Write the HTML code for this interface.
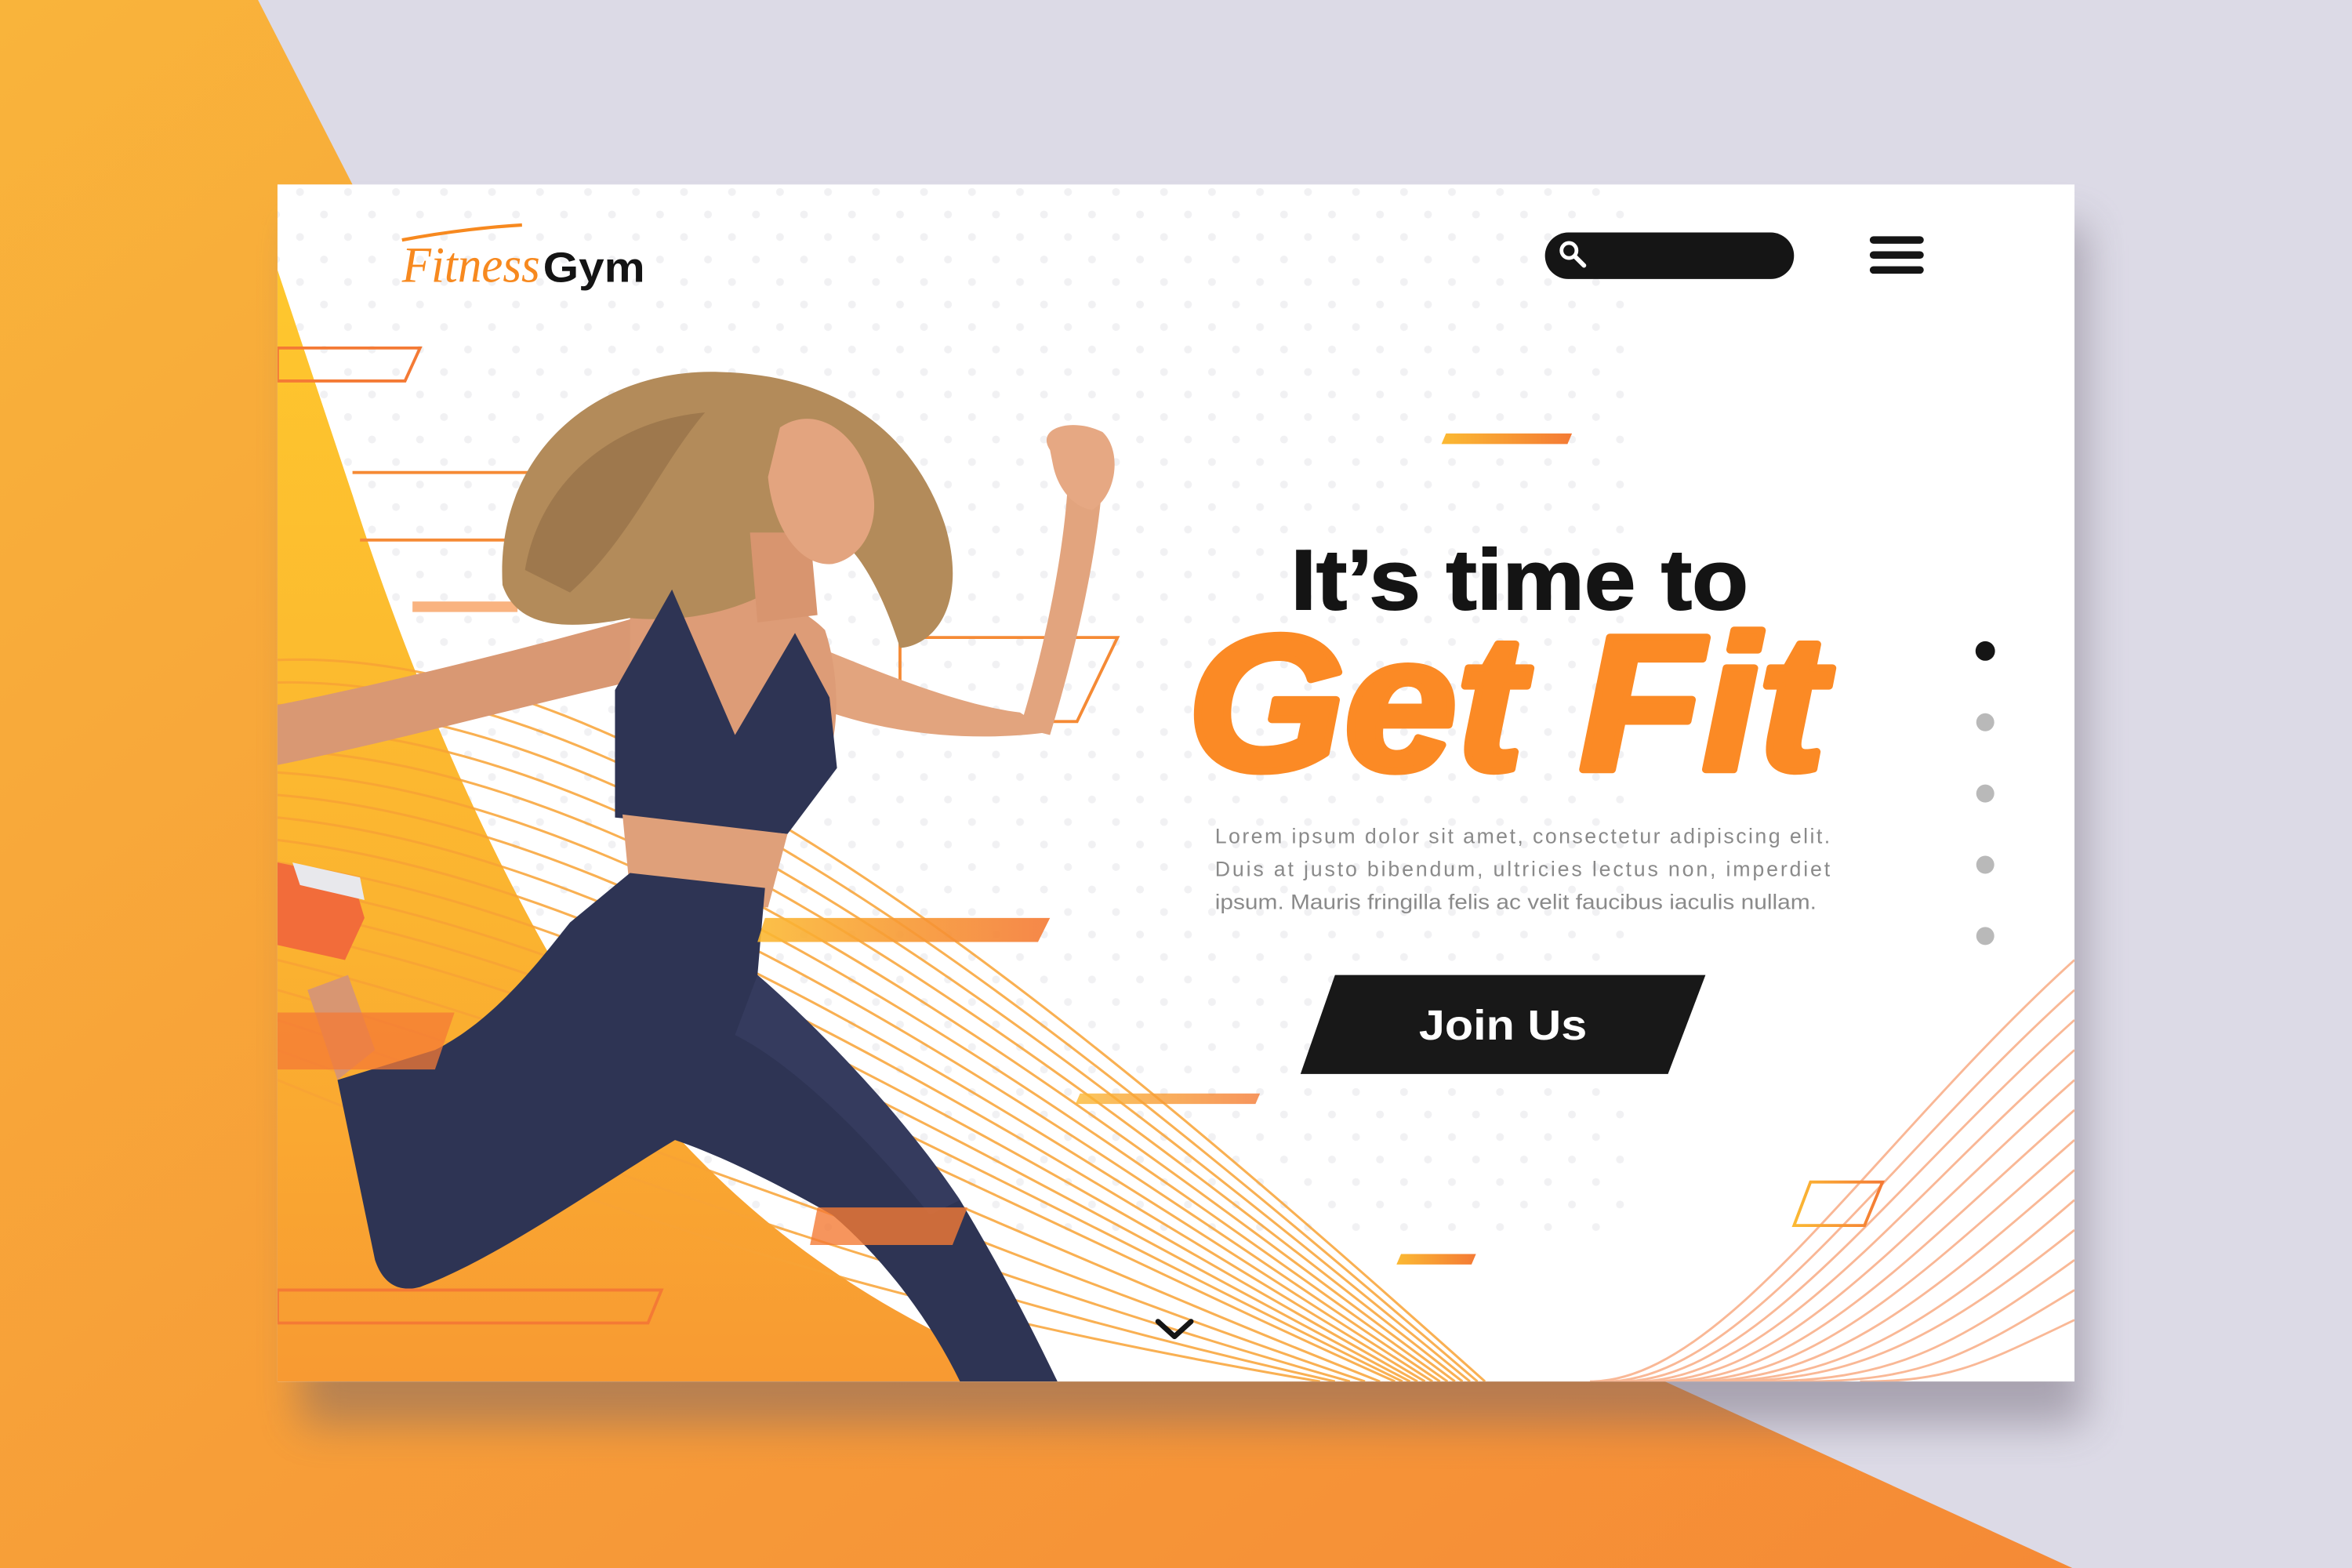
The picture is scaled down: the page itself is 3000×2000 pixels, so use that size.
<!DOCTYPE html>
<html><head><meta charset="utf-8"><style>
html,body{margin:0;padding:0;width:3000px;height:2000px;overflow:hidden;background:#dcdae6}
svg{display:block}
</style></head><body>
<svg width="3000" height="2000" viewBox="0 0 1568 1045.33" xmlns="http://www.w3.org/2000/svg">
<defs>
<linearGradient id="bgo" x1="0" y1="0" x2="1" y2="1"><stop offset="0" stop-color="#f9b43b"/><stop offset="1" stop-color="#f58a36"/></linearGradient>
<linearGradient id="yel" x1="0" y1="0" x2="0" y2="1"><stop offset="0" stop-color="#fec72e"/><stop offset="0.6" stop-color="#fbb330"/><stop offset="1" stop-color="#f89a32"/></linearGradient>
<linearGradient id="bar" x1="0" y1="0" x2="1" y2="0"><stop offset="0" stop-color="#fbb933"/><stop offset="1" stop-color="#f47a35"/></linearGradient>
<filter id="sh" x="-10%" y="-10%" width="120%" height="130%"><feGaussianBlur stdDeviation="14"/></filter>
<clipPath id="card"><rect x="185" y="123" width="1198" height="798"/></clipPath>
<pattern id="dots" width="32" height="30" patternUnits="userSpaceOnUse"><circle cx="8" cy="8" r="2.6" fill="#f1f1f3"/><circle cx="24" cy="23" r="2.6" fill="#f1f1f3"/></pattern>
</defs>
<rect width="1568" height="1046" fill="#dcdae6"/>
<polygon points="0,0 172,0 235,123 185,123 185,921 1110,921 1383,1046 0,1046" fill="url(#bgo)"/>
<rect x="200" y="150" width="1190" height="800" fill="#6a6070" opacity="0.45" filter="url(#sh)"/>
<rect x="185" y="123" width="1198" height="798" fill="#fff"/>
<g clip-path="url(#card)">
<rect x="185" y="123" width="900" height="700" fill="url(#dots)"/>
<path d="M185,180 L235,330 C270,440 320,560 380,660 C450,780 560,870 700,921 L185,921 Z" fill="url(#yel)"/>
<g fill="none" stroke="#f8a335" stroke-width="1.6" opacity="0.85">
<path d="M185,440 C430,430 720,680 990,921"/>
<path d="M185,455 C430,450 715,690 985,921"/>
<path d="M185,470 C430,470 710,700 980,921"/>
<path d="M185,485 C430,490 705,710 975,921"/>
<path d="M185,500 C430,510 700,720 970,921"/>
<path d="M185,515 C430,530 695,730 965,921"/>
<path d="M185,530 C430,550 690,740 960,921"/>
<path d="M185,545 C430,570 685,750 955,921"/>
<path d="M185,560 C430,590 680,760 950,921"/>
<path d="M185,575 C430,610 675,770 945,921"/>
<path d="M185,590 C430,630 670,780 940,921"/>
<path d="M185,605 C430,650 665,790 935,921"/>
<path d="M185,620 C430,670 660,800 930,921"/>
<path d="M185,640 C430,700 650,815 920,921"/>
<path d="M185,660 C430,730 640,830 910,921"/>
<path d="M185,680 C430,760 630,845 900,921"/>
<path d="M185,700 C430,790 620,860 890,921"/>
<path d="M185,720 C430,820 610,875 880,921"/>
</g>
<g fill="none" stroke="#f79a6a" stroke-width="1.5" opacity="0.7">
<path d="M1383,640 C1250,760 1150,921 1060,921"/>
<path d="M1383,660 C1255,775 1160,921 1070,921"/>
<path d="M1383,680 C1260,790 1170,921 1080,921"/>
<path d="M1383,700 C1265,805 1180,921 1090,921"/>
<path d="M1383,720 C1270,820 1190,921 1100,921"/>
<path d="M1383,740 C1275,835 1200,921 1110,921"/>
<path d="M1383,760 C1280,850 1210,921 1120,921"/>
<path d="M1383,780 C1285,865 1220,921 1130,921"/>
<path d="M1383,800 C1290,880 1230,921 1140,921"/>
<path d="M1383,820 C1295,890 1240,921 1150,921"/>
<path d="M1383,840 C1300,900 1260,921 1170,921"/>
<path d="M1383,860 C1310,905 1280,921 1200,921"/>
<path d="M1383,880 C1320,910 1300,921 1240,921"/>
</g>
<polygon points="185,232 280,232 270,254 185,254" fill="none" stroke="#f47a35" stroke-width="2"/>
<line x1="235" y1="315" x2="390" y2="315" stroke="#f58a35" stroke-width="2"/>
<line x1="240" y1="360" x2="350" y2="360" stroke="#f58a35" stroke-width="2"/>
<rect x="275" y="401" width="70" height="7" fill="#f8a060" opacity="0.8"/>
<polygon points="600,425 745,425 718,481 600,481" fill="none" stroke="#f58a35" stroke-width="2"/>
<g>
<path d="M430,410 C360,430 260,455 185,470 L185,510 C260,495 350,470 440,450 Z" fill="#d99873"/>
<path d="M530,425 C590,450 640,470 680,475 L700,488 C650,495 590,490 540,470 Z" fill="#e2a47e"/>
<path d="M680,485 C700,420 710,360 712,320 L735,322 C730,380 715,440 700,490 Z" fill="#e2a47e"/>
<path d="M700,300 C690,285 715,278 735,288 C748,300 745,330 728,340 C715,338 705,325 702,310 Z" fill="#e6a883"/>
<path d="M420,400 C460,385 520,390 550,420 C560,450 560,490 550,510 L420,520 Z" fill="#dd9c77"/>
<path d="M335,390 C330,300 400,245 480,248 C560,250 610,290 630,350 C645,400 625,430 600,432 C590,400 575,370 560,360 L520,390 C490,410 450,415 420,412 C380,420 345,420 335,390 Z" fill="#b38b5a"/>
<path d="M350,380 C360,320 410,280 470,275 C440,310 420,360 380,395 Z" fill="#8f6c44" opacity="0.6"/>
<path d="M500,355 L540,355 L545,410 L505,415 Z" fill="#d8956f"/>
<path d="M520,285 C545,268 575,290 582,328 C586,350 575,372 555,376 C532,378 515,350 512,318 Z" fill="#e3a47f"/>
<path d="M410,460 L448,393 L490,490 L530,422 L553,465 L558,512 L525,556 L410,545 Z" fill="#2e3454"/>
<path d="M415,543 L525,556 L512,605 L420,595 Z" fill="#dfa07a"/>
<path d="M420,582 L510,592 L505,650 C540,680 600,740 640,800 C670,850 690,890 705,921 L640,921 C620,880 590,840 555,810 C520,790 480,770 450,760 C400,790 330,840 280,858 C265,862 255,855 250,840 L225,720 L290,700 C330,680 360,640 380,615 Z" fill="#2e3454"/>
<path d="M505,650 C540,680 600,740 640,800 L620,810 C580,760 530,710 490,690 Z" fill="#3a4165" opacity="0.6"/>
<path d="M225,720 L250,700 L232,650 L205,660 Z" fill="#d89672"/>
<path d="M185,575 L235,585 L243,612 L230,640 L185,630 Z" fill="#f26c3a"/>
<path d="M195,575 L240,585 L243,600 L200,590 Z" fill="#e8e8ec"/>
</g>
<polygon points="510,612 700,612 692,628 505,628" fill="url(#bar)" opacity="0.9"/>
<polygon points="185,675 303,675 290,713 185,713" fill="#f47a35" opacity="0.75"/>
<polygon points="545,805 645,805 635,830 540,830" fill="#f47a35" opacity="0.8"/>
<polygon points="185,860 441,860 432,882 185,882" fill="none" stroke="#f47a35" stroke-width="2"/>
<polygon points="720,729 840,729 837,736 717,736" fill="url(#bar)" opacity="0.8"/>
<polygon points="934,836 984,836 981,843 931,843" fill="url(#bar)"/>
<polygon points="1207,788 1255,788 1243,817 1196,817" fill="none" stroke="url(#bar)" stroke-width="2"/>
<polygon points="964,289 1048,289 1045,296 961,296" fill="url(#bar)"/>
</g>
<path d="M268,160 C300,154 330,151 348,150" stroke="#f7891f" stroke-width="2.2" fill="none"/>
<text x="268" y="188" font-family="Liberation Serif, serif" font-style="italic" font-size="34" fill="#f7891f" textLength="92" lengthAdjust="spacingAndGlyphs">Fitness</text>
<text x="362" y="188" font-family="Liberation Sans, sans-serif" font-weight="bold" font-size="28" fill="#141414" textLength="68" lengthAdjust="spacingAndGlyphs">Gym</text>
<rect x="1030" y="155" width="166" height="31" rx="15.5" fill="#151515"/>
<circle cx="1046" cy="167" r="5" fill="none" stroke="#fff" stroke-width="2.5"/>
<line x1="1050" y1="171" x2="1056" y2="177" stroke="#fff" stroke-width="3" stroke-linecap="round"/>
<g stroke="#151515" stroke-width="5" stroke-linecap="round"><line x1="1249" y1="160" x2="1280" y2="160"/><line x1="1249" y1="170" x2="1280" y2="170"/><line x1="1249" y1="180" x2="1280" y2="180"/></g>
<text x="1013" y="406" text-anchor="middle" font-family="Liberation Sans, sans-serif" font-weight="bold" font-size="57" fill="#141414" stroke="#141414" stroke-width="1" textLength="305" lengthAdjust="spacingAndGlyphs">It’s time to</text>
<text x="792" y="513" font-family="Liberation Sans, sans-serif" font-weight="bold" font-style="italic" font-size="128" fill="#fb8a25" stroke="#fb8a25" stroke-width="5" stroke-linejoin="round" textLength="425" lengthAdjust="spacingAndGlyphs">Get Fit</text>
<g font-family="Liberation Sans, sans-serif" font-size="14" fill="#8a8a8a">
<text x="810" y="562" textLength="410" lengthAdjust="spacing">Lorem ipsum dolor sit amet, consectetur adipiscing elit.</text>
<text x="810" y="584" textLength="410" lengthAdjust="spacing">Duis at justo bibendum, ultricies lectus non, imperdiet</text>
<text x="810" y="606" textLength="401" lengthAdjust="spacingAndGlyphs">ipsum. Mauris fringilla felis ac velit faucibus iaculis nullam.</text>
</g>
<polygon points="890,650 1137,650 1112,716 867,716" fill="#181818"/>
<text x="1002" y="693" text-anchor="middle" font-family="Liberation Sans, sans-serif" font-weight="bold" font-size="28" fill="#fff" textLength="112" lengthAdjust="spacingAndGlyphs">Join Us</text>
<circle cx="1323.5" cy="434" r="6.5" fill="#151515"/>
<circle cx="1323.5" cy="481.5" r="6" fill="#b9b9b9"/>
<circle cx="1323.5" cy="529" r="6" fill="#b9b9b9"/>
<circle cx="1323.5" cy="576.5" r="6" fill="#b9b9b9"/>
<circle cx="1323.5" cy="624" r="6" fill="#b9b9b9"/>
<path d="M772,881 L783,891 L794,881" fill="none" stroke="#151515" stroke-width="3.5" stroke-linecap="round" stroke-linejoin="round"/>
</svg>
</body></html>
